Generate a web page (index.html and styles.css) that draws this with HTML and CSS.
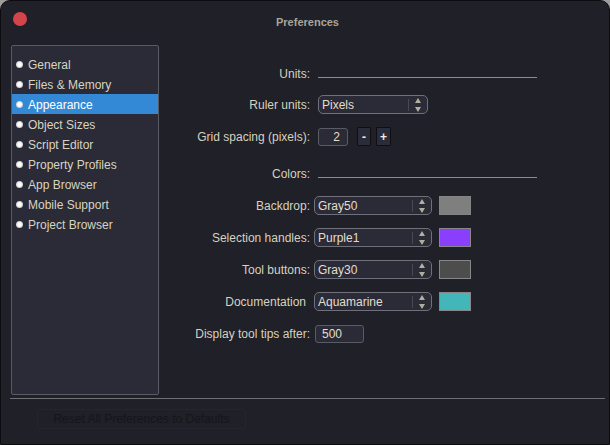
FILE: index.html
```html
<!DOCTYPE html>
<html>
<head>
<meta charset="utf-8">
<link rel="stylesheet" href="styles.css">
</head>
<body>
<div class="window">
  <div class="titlebar">
    <span class="close"></span>
    <div class="title">Preferences</div>
  </div>
  <div class="main">
    <ul class="nav">
      <li class="nav-item"><span class="bullet"></span>General</li>
      <li class="nav-item"><span class="bullet"></span>Files &amp; Memory</li>
      <li class="nav-item active"><span class="bullet"></span>Appearance</li>
      <li class="nav-item"><span class="bullet"></span>Object Sizes</li>
      <li class="nav-item"><span class="bullet"></span>Script Editor</li>
      <li class="nav-item"><span class="bullet"></span>Property Profiles</li>
      <li class="nav-item"><span class="bullet"></span>App Browser</li>
      <li class="nav-item"><span class="bullet"></span>Mobile Support</li>
      <li class="nav-item"><span class="bullet"></span>Project Browser</li>
    </ul>
    <div class="panel">
      <div class="section">
        <div class="heading"><span class="label">Units:</span><span class="rule"></span></div>
        <div class="row">
          <span class="label">Ruler units:</span>
          <div class="select select-ruler"><span class="value">Pixels</span><span class="spin"><i class="up"></i><i class="down"></i></span></div>
        </div>
        <div class="row">
          <span class="label">Grid spacing (pixels):</span>
          <div class="field field-grid">2</div>
          <button class="step step-minus">-</button>
          <button class="step step-plus">+</button>
        </div>
      </div>
      <div class="section section-colors">
        <div class="heading"><span class="label">Colors:</span><span class="rule"></span></div>
        <div class="row">
          <span class="label">Backdrop:</span>
          <div class="select select-color"><span class="value">Gray50</span><span class="spin"><i class="up"></i><i class="down"></i></span></div>
          <span class="swatch swatch-gray50"></span>
        </div>
        <div class="row">
          <span class="label">Selection handles:</span>
          <div class="select select-color"><span class="value">Purple1</span><span class="spin"><i class="up"></i><i class="down"></i></span></div>
          <span class="swatch swatch-purple"></span>
        </div>
        <div class="row">
          <span class="label">Tool buttons:</span>
          <div class="select select-color"><span class="value">Gray30</span><span class="spin"><i class="up"></i><i class="down"></i></span></div>
          <span class="swatch swatch-gray30"></span>
        </div>
        <div class="row">
          <span class="label label-plain">Documentation</span>
          <div class="select select-color"><span class="value">Aquamarine</span><span class="spin"><i class="up"></i><i class="down"></i></span></div>
          <span class="swatch swatch-aqua"></span>
        </div>
        <div class="row">
          <span class="label">Display tool tips after:</span>
          <div class="field field-tips">500</div>
        </div>
      </div>
    </div>
  </div>
  <div class="separator"></div>
  <div class="footer">
    <button class="reset" disabled>Reset All Preferences to Defaults</button>
  </div>
</div>
</body>
</html>
```

FILE: styles.css
```css
* { box-sizing: border-box; }

html, body {
  margin: 0;
  padding: 0;
  background: #9d9d9d;
}

body {
  font-family: "Liberation Sans", Arial, sans-serif;
  font-size: 12px;
  color: #d6d2bf;
}

.window {
  width: 610px;
  height: 445px;
  border: 1px solid #0c0c10;
  border-radius: 10px 10px 0 0;
  background: #1f2028;
  display: flex;
  flex-direction: column;
  overflow: hidden;
}

.titlebar {
  height: 44px;
  padding: 11px 12px 0 12px;
  display: flex;
  align-items: flex-start;
}

.close {
  width: 14px;
  height: 14px;
  border-radius: 50%;
  background: #d2454b;
  flex: none;
}

.title {
  flex: 1;
  margin-top: 3px;
  padding-right: 9px;
  text-align: center;
  font-weight: bold;
  font-size: 11px;
  line-height: 14px;
  color: #aaa597;
}

.main {
  display: flex;
  height: 350px;
}

.nav {
  list-style: none;
  margin: 0 0 0 10px;
  padding: 8px 0 0 0;
  width: 148px;
  height: 350px;
  background: #2a2b36;
  border: 1px solid #595a62;
  border-radius: 2px;
}

.nav-item {
  height: 20px;
  display: flex;
  align-items: center;
  gap: 5px;
  padding: 2px 0 0 4px;
  color: #d8d4c1;
  white-space: nowrap;
}

.nav-item.active {
  background: #3389d6;
  color: #ffffff;
}

.bullet {
  width: 7px;
  height: 7px;
  margin-top: -1px;
  border-radius: 50%;
  background: radial-gradient(circle, #ffffff 35%, #d6d6d6 60%, #8d8d8d 100%);
  flex: none;
}

.panel {
  flex: 1;
  padding: 22px 0 0 21px;
  display: flex;
  flex-direction: column;
}

.section {
  display: flex;
  flex-direction: column;
  gap: 13px;
}

.section-colors {
  margin-top: 21px;
}

.heading {
  display: flex;
  align-items: baseline;
  line-height: 14px;
  margin-bottom: 1px;
}

.section-colors .heading {
  margin-bottom: 2px;
}

.label {
  width: 130px;
  text-align: right;
  line-height: 14px;
  flex: none;
  color: #d6d2bf;
  white-space: nowrap;
}

.label-plain {
  padding-right: 4px;
}

.rule {
  margin-left: 8px;
  width: 219px;
  height: 1px;
  background: #8c8c8e;
}

.row {
  display: flex;
  align-items: center;
  height: 19px;
}

.select {
  height: 19px;
  display: flex;
  align-items: center;
  background: #2a2b37;
  border: 1px solid #6f7079;
  border-radius: 5px;
  color: #e2decc;
}

.select-ruler {
  margin-left: 8px;
  width: 110px;
}

.select-color {
  margin-left: 4px;
  width: 118px;
}

.value {
  flex: 1;
  padding-left: 3px;
  line-height: 14px;
  white-space: nowrap;
}

.spin {
  width: 19px;
  align-self: stretch;
  margin: 3px 0 2px 0;
  border-left: 1px solid #474852;
  display: flex;
  flex-direction: column;
  align-items: center;
  justify-content: center;
  gap: 4px;
}

.up, .down {
  display: block;
  width: 0;
  height: 0;
  border-left: 3px solid transparent;
  border-right: 3px solid transparent;
}

.up { border-bottom: 5px solid #b3af9f; }
.down { border-top: 5px solid #b3af9f; }

.field {
  height: 18px;
  background: #2a2b37;
  border: 1px solid #5a5b64;
  border-radius: 3px;
  color: #e2decc;
  line-height: 16px;
}

.field-grid {
  margin-left: 8px;
  width: 30px;
  text-align: right;
  padding-right: 7px;
}

.field-tips {
  margin-left: 5px;
  width: 49px;
  padding-left: 6px;
}

.step {
  height: 19px;
  padding: 0;
  font-family: inherit;
  font-size: 12px;
  font-weight: bold;
  color: #ecebe4;
  background: #2b2c39;
  border: 1px solid #0f0f13;
  border-radius: 1px;
}

.step-minus {
  margin-left: 9px;
  width: 14px;
}

.step-plus {
  margin-left: 5px;
  width: 15px;
}

.swatch {
  margin-left: 7px;
  width: 32px;
  height: 19px;
  border: 1px solid #878787;
}

.swatch-gray50 { background: #7f7f7f; border-color: #838383; }
.swatch-purple { background: #8a3ffc; }
.swatch-gray30 { background: #4d4d4d; }
.swatch-aqua { background: #43b6b9; }

.separator {
  margin: 3px 4px 0 9px;
  height: 1px;
  background: #6e6e73;
}

.footer {
  padding: 10px 0 0 36px;
}

.reset {
  width: 209px;
  height: 20px;
  padding: 0;
  font-family: inherit;
  font-size: 12px;
  color: #15161b;
  background: #1f2028;
  border: 1px solid #25262d;
  border-radius: 3px;
}
```
